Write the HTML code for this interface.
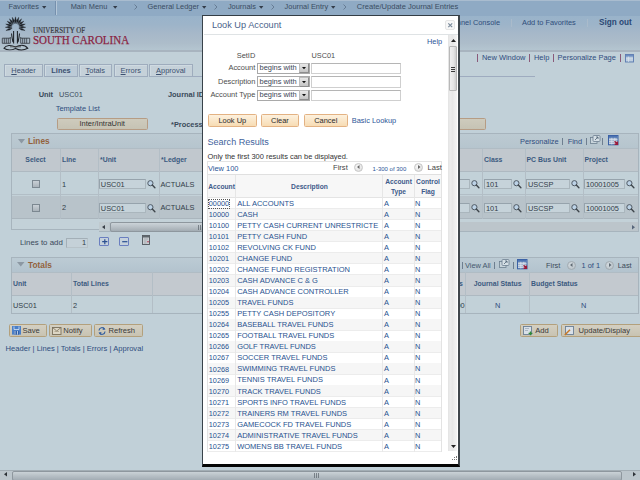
<!DOCTYPE html><html><head><meta charset="utf-8"><style>
html,body{margin:0;padding:0;width:640px;height:480px;overflow:hidden;background:#c1d0d8;}
body{position:relative;font-family:"Liberation Sans",sans-serif;}
.t{position:absolute;white-space:nowrap;line-height:1;}
.b{position:absolute;box-sizing:border-box;}
svg{position:absolute;overflow:visible;}
</style></head><body>
<div class="b" style="left:0.00px;top:0.00px;width:640.00px;height:16.00px;background:#8faac4;"></div>
<div class="b" style="left:0.00px;top:15.60px;width:640.00px;height:0.80px;background:#8aa3bd;"></div>
<div class="b" style="left:0.00px;top:0.00px;width:640.00px;height:1.20px;background:#a9bccf;"></div>
<div class="t" style="left:8.50px;top:2.87px;font-size:7.4px;color:#3a4c62;">Favorites</div>
<svg style="left:42px;top:5.8px" width="5" height="3"><path d="M0 0H4.4L2.2 2.7Z" fill="#333d4a"/></svg>
<div class="b" style="left:54.90px;top:1.20px;width:1.10px;height:14.30px;background:#7690ad;"></div>
<div class="b" style="left:56.00px;top:1.20px;width:0.80px;height:14.30px;background:#b5c7d8;"></div>
<div class="t" style="left:70.70px;top:2.87px;font-size:7.4px;color:#3a4c62;">Main Menu</div>
<svg style="left:112.6px;top:5.8px" width="5" height="3"><path d="M0 0H4.4L2.2 2.7Z" fill="#333d4a"/></svg>
<svg style="left:133.5px;top:4px" width="4" height="6"><path d="M0.5 0.5L3 3L0.5 5.5" stroke="#5c7088" stroke-width="0.8" fill="none"/></svg>
<div class="t" style="left:147.60px;top:2.87px;font-size:7.4px;color:#3a4c62;">General Ledger</div>
<svg style="left:202px;top:5.8px" width="5" height="3"><path d="M0 0H4.4L2.2 2.7Z" fill="#333d4a"/></svg>
<svg style="left:214px;top:4px" width="4" height="6"><path d="M0.5 0.5L3 3L0.5 5.5" stroke="#5c7088" stroke-width="0.8" fill="none"/></svg>
<div class="t" style="left:227.90px;top:2.87px;font-size:7.4px;color:#3a4c62;">Journals</div>
<svg style="left:258.8px;top:5.8px" width="5" height="3"><path d="M0 0H4.4L2.2 2.7Z" fill="#333d4a"/></svg>
<svg style="left:271px;top:4px" width="4" height="6"><path d="M0.5 0.5L3 3L0.5 5.5" stroke="#5c7088" stroke-width="0.8" fill="none"/></svg>
<div class="t" style="left:284.60px;top:2.87px;font-size:7.4px;color:#3a4c62;">Journal Entry</div>
<svg style="left:330.5px;top:5.8px" width="5" height="3"><path d="M0 0H4.4L2.2 2.7Z" fill="#333d4a"/></svg>
<svg style="left:342.5px;top:4px" width="4" height="6"><path d="M0.5 0.5L3 3L0.5 5.5" stroke="#5c7088" stroke-width="0.8" fill="none"/></svg>
<div class="t" style="left:356.80px;top:2.80px;font-size:7.55px;color:#3a4c62;">Create/Update Journal Entries</div>
<div class="b" style="left:0.00px;top:16.40px;width:640.00px;height:33.60px;background:linear-gradient(#99b3ca,#9db4c9 25%,#a6b8c9 50%,#adbdca 80%,#b4c5d0);"></div>
<div class="b" style="left:0.00px;top:50.00px;width:640.00px;height:1.50px;background:#a8b4bf;"></div>
<div class="t" style="right:140.00px;top:18.87px;font-size:7.4px;color:#2f4d7a;">Personnel Console</div>
<div class="b" style="left:510.80px;top:18.50px;width:0.70px;height:8.00px;background:#aabbcb;"></div>
<div class="t" style="left:522.00px;top:18.87px;font-size:7.4px;color:#2f4d7a;">Add to Favorites</div>
<div class="b" style="left:586.80px;top:18.50px;width:0.70px;height:8.00px;background:#aabbcb;"></div>
<div class="t" style="left:599.00px;top:19.18px;font-size:8.2px;color:#2b4874;font-weight:bold;">Sign out</div>
<svg style="left:0px;top:14px" width="34" height="38" viewBox="0 14 34 38"><path d="M12.21 28.20L9.08 28.38L5.92 30.49L9.70 30.07ZM12.00 27.10L8.98 26.29L5.30 27.30L9.03 28.09ZM12.15 26.00L9.53 24.27L5.73 24.07L9.01 26.00ZM12.63 24.99L10.69 22.53L7.14 21.15L9.66 24.01ZM13.41 24.19L12.34 21.25L9.41 18.82L10.90 22.32ZM14.40 23.68L14.31 20.55L12.29 17.32L12.60 21.11ZM15.50 23.50L16.40 20.50L15.50 16.80L14.60 20.50ZM16.60 23.68L18.40 21.11L18.71 17.32L16.69 20.55ZM17.59 24.19L20.10 22.32L21.59 18.82L18.66 21.25ZM18.37 24.99L21.34 24.01L23.86 21.15L20.31 22.53ZM18.85 26.00L21.99 26.00L25.27 24.07L21.47 24.27ZM19.00 27.10L21.97 28.09L25.70 27.30L22.02 26.29ZM18.79 28.20L21.30 30.07L25.08 30.49L21.92 28.38Z" fill="#1c2026" stroke="#1c2026" stroke-width="0.35"/><path d="M13.6 31V43.5M17.4 31V43.5M11.5 33.5Q12 38 13 42M19.5 33.5Q19 38 18 42" stroke="#1e2228" stroke-width="1.05" fill="none"/><path d="M2.3 38.2H10.3M20.7 38.2H29.7M2.3 38.2V43.3H10.3V37M20.7 37V43.3H29.7V38.2M4.3 38.2V43.3M6.3 38.2V43.3M8.3 38.2V43.3M22.7 38.2V43.3M24.7 38.2V43.3M26.7 38.2V43.3" stroke="#30353c" stroke-width="0.8" fill="none"/><path d="M4 48.3C6 44.8 11 44.8 15.5 47C20 44.8 25 44.8 27.8 48.3C24 50.3 19 50.3 15.5 48.5C12 50.3 7 50.3 4 48.3Z" stroke="#1e2228" stroke-width="1.05" fill="none"/><path d="M10 46.8H21" stroke="#444" stroke-width="0.8"/></svg>
<div class="t" style="left:33.00px;top:26.58px;font-size:7.6px;color:#35353a;font-family:&quot;Liberation Serif&quot;,serif;-webkit-text-stroke:0.15px #35353a;transform:scaleX(0.915);transform-origin:0 0;">UNIVERSITY OF</div>
<div class="t" style="left:32.60px;top:32.73px;font-size:13.4px;color:#8a1f42;font-family:&quot;Liberation Serif&quot;,serif;transform:scaleX(0.82);transform-origin:0 0;-webkit-text-stroke:0.25px #8a1f42;">SOUTH CAROLINA</div>
<div class="b" style="left:477.00px;top:54.00px;width:1.00px;height:8.00px;background:#8a5a7a;"></div>
<div class="t" style="left:482.00px;top:54.35px;font-size:7.45px;color:#2f4d7e;">New Window</div>
<div class="b" style="left:529.30px;top:54.00px;width:1.00px;height:8.00px;background:#8a5a7a;"></div>
<div class="t" style="left:534.00px;top:54.35px;font-size:7.45px;color:#2f4d7e;">Help</div>
<div class="b" style="left:552.80px;top:54.00px;width:1.00px;height:8.00px;background:#8a5a7a;"></div>
<div class="t" style="left:557.60px;top:54.35px;font-size:7.45px;color:#2f4d7e;">Personalize Page</div>
<div class="b" style="left:619.80px;top:54.00px;width:1.00px;height:8.00px;background:#8a5a7a;"></div>
<svg style="left:625px;top:54px" width="9" height="8.5"><rect x="0.5" y="0.5" width="8" height="7.5" fill="#b3c6da" stroke="#5a7ab0" stroke-width="0.9"/><rect x="1" y="1" width="7" height="1.6" fill="#6d8fc2"/><path d="M1 4.3H8M1 6H8M3.5 2.6V8" stroke="#e0e8f0" stroke-width="0.6"/></svg>
<div class="b" style="left:192.00px;top:76.10px;width:343.00px;height:1.00px;background:#9eabbf;"></div>
<div class="b" style="left:4.00px;top:63.80px;width:39.00px;height:13.20px;background:#c5d1d9;border:1px solid #9eacbd;box-shadow:inset 1px 1px 0 #cfdae1;"></div>
<div class="t" style="left:-176.50px;width:400px;text-align:center;top:66.65px;font-size:7.45px;color:#3b5070;"><u>H</u>eader</div>
<div class="b" style="left:44.00px;top:63.80px;width:34.00px;height:13.20px;background:#bccbd7;border:1px solid #9eacbd;box-shadow:inset 1px 1px 0 #cfdae1;"></div>
<div class="t" style="left:-139.00px;width:400px;text-align:center;top:66.65px;font-size:7.45px;color:#3b5070;font-weight:bold;">Lines</div>
<div class="b" style="left:79.00px;top:63.80px;width:32.50px;height:13.20px;background:#c5d1d9;border:1px solid #9eacbd;box-shadow:inset 1px 1px 0 #cfdae1;"></div>
<div class="t" style="left:-104.75px;width:400px;text-align:center;top:66.65px;font-size:7.45px;color:#3b5070;"><u>T</u>otals</div>
<div class="b" style="left:114.00px;top:63.80px;width:33.50px;height:13.20px;background:#c5d1d9;border:1px solid #9eacbd;box-shadow:inset 1px 1px 0 #cfdae1;"></div>
<div class="t" style="left:-69.25px;width:400px;text-align:center;top:66.65px;font-size:7.45px;color:#3b5070;"><u>E</u>rrors</div>
<div class="b" style="left:149.00px;top:63.80px;width:43.50px;height:13.20px;background:#c5d1d9;border:1px solid #9eacbd;box-shadow:inset 1px 1px 0 #cfdae1;"></div>
<div class="t" style="left:-29.25px;width:400px;text-align:center;top:66.65px;font-size:7.45px;color:#3b5070;"><u>A</u>pproval</div>
<div class="t" style="right:587.00px;top:90.97px;font-size:7.4px;color:#3a4a5a;font-weight:bold;">Unit</div>
<div class="t" style="left:59.00px;top:90.97px;font-size:7.4px;color:#3c4c5c;">USC01</div>
<div class="t" style="left:168.00px;top:90.97px;font-size:7.4px;color:#3a4a5a;font-weight:bold;">Journal ID</div>
<div class="t" style="left:55.70px;top:104.83px;font-size:7.5px;color:#2f4d7e;">Template List</div>
<div class="b" style="left:56.50px;top:118.40px;width:91.50px;height:12.00px;background:linear-gradient(#cecbbd,#c6c3b4);border:1px solid #b69c84;border-radius:1.5px;"></div>
<div class="t" style="left:-97.80px;width:400px;text-align:center;top:120.12px;font-size:7.5px;color:#333;">Inter/IntraUnit</div>
<div class="t" style="left:171.00px;top:120.87px;font-size:7.4px;color:#3a4a5a;font-weight:bold;">*Process</div>
<div class="b" style="left:380.00px;top:118.30px;width:105.50px;height:12.20px;background:linear-gradient(#cecbbd,#c6c3b4);border:1px solid #b69c84;border-radius:1.5px;"></div>
<div class="b" style="left:11.00px;top:133.20px;width:628.00px;height:98.80px;background:#c3d1d8;border:1px solid #a7b4bd;"></div>
<div class="b" style="left:12.00px;top:134.20px;width:626.00px;height:14.10px;background:linear-gradient(#bccad2,#b6c5ce);"></div>
<svg style="left:17.5px;top:138.5px" width="8" height="5"><path d="M0 0H7L3.5 4.5Z" fill="#8c98a3"/></svg>
<div class="t" style="left:28.00px;top:136.73px;font-size:8.3px;color:#93623c;font-weight:bold;">Lines</div>
<div class="t" style="left:520.00px;top:137.87px;font-size:7.4px;color:#2f4d7e;">Personalize</div>
<div class="b" style="left:585.50px;top:138.20px;width:0.80px;height:7.00px;background:#6e7f90;"></div>
<div class="t" style="left:567.70px;top:137.87px;font-size:7.4px;color:#2f4d7e;">Find</div>
<div class="b" style="left:602.00px;top:138.20px;width:0.80px;height:7.00px;background:#6e7f90;"></div>
<svg style="left:589.5px;top:135px" width="11" height="9"><rect x="0.5" y="2.5" width="6.5" height="6" fill="#c9d5dc" stroke="#6d7f90" stroke-width="0.8"/><rect x="3" y="0.5" width="7" height="6" rx="1" fill="#d6e0e6" stroke="#6d7f90" stroke-width="0.8"/><path d="M5 5L8 2M6 2H8V4" stroke="#4f6275" stroke-width="0.8" fill="none"/></svg>
<div class="b" style="left:561.50px;top:138.20px;width:0.80px;height:7.00px;background:#6e7f90;"></div>
<svg style="left:607.5px;top:134.8px" width="11" height="10.2"><rect x="0.5" y="0.5" width="9.5" height="9.3" fill="#9fb3cc" stroke="#3b62a6" stroke-width="1"/><rect x="1" y="1" width="8.5" height="1.8" fill="#4d74b3"/><path d="M1 4.6H9.5M1 6.6H9.5M1 8.4H9.5M3.8 2.8V9.5M6.8 2.8V9.5" stroke="#dfe7f0" stroke-width="0.7"/><path d="M6.6 6.3L9.2 8.9M9.4 6.4V9.3H6.5" stroke="#9a1b3a" stroke-width="1.4" fill="none"/></svg>
<div class="b" style="left:12.00px;top:148.30px;width:626.00px;height:23.30px;background:#c1c8ce;border-top:1px solid #b0bcc4;border-bottom:1px solid #aeb9c1;"></div>
<div class="b" style="left:12.00px;top:171.60px;width:626.00px;height:23.90px;background:#c2d1d8;border-bottom:1px solid #b2bec6;"></div>
<div class="b" style="left:12.00px;top:195.50px;width:626.00px;height:23.90px;background:#b8c3ca;border-bottom:1px solid #aab5bd;"></div>
<div class="b" style="left:60.20px;top:149.00px;width:0.90px;height:70.40px;background:#b3bec6;"></div>
<div class="b" style="left:97.90px;top:149.00px;width:0.90px;height:70.40px;background:#b3bec6;"></div>
<div class="b" style="left:158.70px;top:149.00px;width:0.90px;height:70.40px;background:#b3bec6;"></div>
<div class="b" style="left:482.20px;top:149.00px;width:0.90px;height:70.40px;background:#b3bec6;"></div>
<div class="b" style="left:524.60px;top:149.00px;width:0.90px;height:70.40px;background:#b3bec6;"></div>
<div class="b" style="left:582.60px;top:149.00px;width:0.90px;height:70.40px;background:#b3bec6;"></div>
<div class="t" style="left:-164.50px;width:400px;text-align:center;top:157.22px;font-size:6.9px;color:#3b5a80;font-weight:bold;">Select</div>
<div class="t" style="left:62.00px;top:157.22px;font-size:6.9px;color:#3b5a80;font-weight:bold;">Line</div>
<div class="t" style="left:100.00px;top:157.22px;font-size:6.9px;color:#3b5a80;font-weight:bold;">*Unit</div>
<div class="t" style="left:161.00px;top:157.22px;font-size:6.9px;color:#3b5a80;font-weight:bold;">*Ledger</div>
<div class="t" style="left:484.00px;top:157.22px;font-size:6.9px;color:#3b5a80;font-weight:bold;">Class</div>
<div class="t" style="left:526.50px;top:157.22px;font-size:6.9px;color:#3b5a80;font-weight:bold;">PC Bus Unit</div>
<div class="t" style="left:584.50px;top:157.22px;font-size:6.9px;color:#3b5a80;font-weight:bold;">Project</div>
<div class="b" style="left:31.90px;top:180.15px;width:8.10px;height:8.00px;background:linear-gradient(#c9d0d6,#aab3ba);border:1px solid #7c8891;"></div>
<div class="t" style="left:62.00px;top:180.52px;font-size:7.4px;color:#333d47;">1</div>
<div class="b" style="left:98.80px;top:179.05px;width:46.90px;height:10.40px;background:#c6d3da;border:1px solid #96a3ac;border-right-color:#aab6bd;border-bottom-color:#aab6bd;"></div>
<div class="t" style="left:100.80px;top:180.62px;font-size:7.4px;color:#333d47;">USC01</div>
<svg style="left:146.8px;top:180.15px" width="9" height="9"><circle cx="3.4" cy="3.2" r="2.6" stroke="#505a64" stroke-width="1" fill="#bcd2e6"/><path d="M5.3 5.1L7.9 7.8" stroke="#3f464c" stroke-width="1.4" stroke-linecap="round"/></svg>
<div class="t" style="left:160.40px;top:180.52px;font-size:7.4px;color:#333d47;">ACTUALS</div>
<div class="b" style="left:440.00px;top:179.05px;width:29.50px;height:10.40px;background:#c6d3da;border:1px solid #96a3ac;border-right-color:#aab6bd;border-bottom-color:#aab6bd;"></div>
<svg style="left:471px;top:180.15px" width="9" height="9"><circle cx="3.4" cy="3.2" r="2.6" stroke="#505a64" stroke-width="1" fill="#bcd2e6"/><path d="M5.3 5.1L7.9 7.8" stroke="#3f464c" stroke-width="1.4" stroke-linecap="round"/></svg>
<div class="b" style="left:484.00px;top:179.05px;width:27.60px;height:10.40px;background:#c6d3da;border:1px solid #96a3ac;border-right-color:#aab6bd;border-bottom-color:#aab6bd;"></div>
<div class="t" style="left:486.00px;top:180.62px;font-size:7.4px;color:#333d47;">101</div>
<svg style="left:513px;top:180.15px" width="9" height="9"><circle cx="3.4" cy="3.2" r="2.6" stroke="#505a64" stroke-width="1" fill="#bcd2e6"/><path d="M5.3 5.1L7.9 7.8" stroke="#3f464c" stroke-width="1.4" stroke-linecap="round"/></svg>
<div class="b" style="left:526.00px;top:179.05px;width:43.70px;height:10.40px;background:#c6d3da;border:1px solid #96a3ac;border-right-color:#aab6bd;border-bottom-color:#aab6bd;"></div>
<div class="t" style="left:528.00px;top:180.62px;font-size:7.4px;color:#333d47;">USCSP</div>
<svg style="left:571px;top:180.15px" width="9" height="9"><circle cx="3.4" cy="3.2" r="2.6" stroke="#505a64" stroke-width="1" fill="#bcd2e6"/><path d="M5.3 5.1L7.9 7.8" stroke="#3f464c" stroke-width="1.4" stroke-linecap="round"/></svg>
<div class="b" style="left:584.00px;top:179.05px;width:40.60px;height:10.40px;background:#c6d3da;border:1px solid #96a3ac;border-right-color:#aab6bd;border-bottom-color:#aab6bd;"></div>
<div class="t" style="left:586.00px;top:180.62px;font-size:7.4px;color:#333d47;">10001005</div>
<svg style="left:626px;top:180.15px" width="9" height="9"><circle cx="3.4" cy="3.2" r="2.6" stroke="#505a64" stroke-width="1" fill="#bcd2e6"/><path d="M5.3 5.1L7.9 7.8" stroke="#3f464c" stroke-width="1.4" stroke-linecap="round"/></svg>
<div class="b" style="left:31.90px;top:204.05px;width:8.10px;height:8.00px;background:linear-gradient(#c9d0d6,#aab3ba);border:1px solid #7c8891;"></div>
<div class="t" style="left:62.00px;top:204.42px;font-size:7.4px;color:#333d47;">2</div>
<div class="b" style="left:98.80px;top:202.95px;width:46.90px;height:10.40px;background:#c6d3da;border:1px solid #96a3ac;border-right-color:#aab6bd;border-bottom-color:#aab6bd;"></div>
<div class="t" style="left:100.80px;top:204.52px;font-size:7.4px;color:#333d47;">USC01</div>
<svg style="left:146.8px;top:204.04999999999998px" width="9" height="9"><circle cx="3.4" cy="3.2" r="2.6" stroke="#505a64" stroke-width="1" fill="#bcd2e6"/><path d="M5.3 5.1L7.9 7.8" stroke="#3f464c" stroke-width="1.4" stroke-linecap="round"/></svg>
<div class="t" style="left:160.40px;top:204.42px;font-size:7.4px;color:#333d47;">ACTUALS</div>
<div class="b" style="left:440.00px;top:202.95px;width:29.50px;height:10.40px;background:#c6d3da;border:1px solid #96a3ac;border-right-color:#aab6bd;border-bottom-color:#aab6bd;"></div>
<svg style="left:471px;top:204.04999999999998px" width="9" height="9"><circle cx="3.4" cy="3.2" r="2.6" stroke="#505a64" stroke-width="1" fill="#bcd2e6"/><path d="M5.3 5.1L7.9 7.8" stroke="#3f464c" stroke-width="1.4" stroke-linecap="round"/></svg>
<div class="b" style="left:484.00px;top:202.95px;width:27.60px;height:10.40px;background:#c6d3da;border:1px solid #96a3ac;border-right-color:#aab6bd;border-bottom-color:#aab6bd;"></div>
<div class="t" style="left:486.00px;top:204.52px;font-size:7.4px;color:#333d47;">101</div>
<svg style="left:513px;top:204.04999999999998px" width="9" height="9"><circle cx="3.4" cy="3.2" r="2.6" stroke="#505a64" stroke-width="1" fill="#bcd2e6"/><path d="M5.3 5.1L7.9 7.8" stroke="#3f464c" stroke-width="1.4" stroke-linecap="round"/></svg>
<div class="b" style="left:526.00px;top:202.95px;width:43.70px;height:10.40px;background:#c6d3da;border:1px solid #96a3ac;border-right-color:#aab6bd;border-bottom-color:#aab6bd;"></div>
<div class="t" style="left:528.00px;top:204.52px;font-size:7.4px;color:#333d47;">USCSP</div>
<svg style="left:571px;top:204.04999999999998px" width="9" height="9"><circle cx="3.4" cy="3.2" r="2.6" stroke="#505a64" stroke-width="1" fill="#bcd2e6"/><path d="M5.3 5.1L7.9 7.8" stroke="#3f464c" stroke-width="1.4" stroke-linecap="round"/></svg>
<div class="b" style="left:584.00px;top:202.95px;width:40.60px;height:10.40px;background:#c6d3da;border:1px solid #96a3ac;border-right-color:#aab6bd;border-bottom-color:#aab6bd;"></div>
<div class="t" style="left:586.00px;top:204.52px;font-size:7.4px;color:#333d47;">10001005</div>
<svg style="left:626px;top:204.04999999999998px" width="9" height="9"><circle cx="3.4" cy="3.2" r="2.6" stroke="#505a64" stroke-width="1" fill="#bcd2e6"/><path d="M5.3 5.1L7.9 7.8" stroke="#3f464c" stroke-width="1.4" stroke-linecap="round"/></svg>
<div class="b" style="left:11.00px;top:228.90px;width:88.00px;height:1.10px;background:#a7b4bd;"></div>
<div class="b" style="left:11.00px;top:230.00px;width:87.75px;height:3.00px;background:#c1d0d8;"></div>
<div class="b" style="left:98.75px;top:222.30px;width:539.25px;height:9.20px;background:#bcc5cb;"></div>
<div class="b" style="left:98.75px;top:222.30px;width:10.00px;height:9.20px;background:#c0cacf;"></div>
<svg style="left:102.2px;top:224.8px" width="4" height="5"><path d="M3 0V4.2L0 2.1Z" fill="#3a4048"/></svg>
<div class="b" style="left:110.00px;top:222.30px;width:182.00px;height:9.40px;background:linear-gradient(#cbd3d8,#b8c0c6 50%,#a3acb3);border:1px solid #8e979e;border-radius:2px;"></div>
<svg style="left:197.5px;top:224.5px" width="5" height="5"><path d="M0.5 0V5M2.5 0V5M4.5 0V5" stroke="#5a636a" stroke-width="0.7"/></svg>
<svg style="left:632px;top:224.8px" width="4" height="5"><path d="M0 0V4.6L3 2.3Z" fill="#56657a"/></svg>
<div class="t" style="left:20.00px;top:239.45px;font-size:7.85px;color:#3a4a5a;">Lines to add</div>
<div class="b" style="left:65.50px;top:238.00px;width:22.50px;height:10.30px;background:#c5d1d8;border:1px solid #a3afb7;border-right-color:#b8c3c9;border-bottom-color:#b8c3c9;"></div>
<div class="t" style="right:554.00px;top:239.37px;font-size:7.4px;color:#333d47;">1</div>
<div class="b" style="left:98.90px;top:237.20px;width:10.60px;height:8.40px;background:#c5d1dc;border:1px solid #6a7fc0;border-radius:1px;"></div>
<svg style="left:101.5px;top:238.8px" width="6" height="5.5"><path d="M2.8 0.2V5.2M0.2 2.7H5.4" stroke="#2a4f90" stroke-width="1.2"/></svg>
<div class="b" style="left:118.90px;top:237.20px;width:10.60px;height:8.40px;background:#c5d1dc;border:1px solid #6a7fc0;border-radius:1px;"></div>
<svg style="left:121.5px;top:238.8px" width="6" height="5.5"><path d="M0.2 2.7H5.4" stroke="#2a4f90" stroke-width="1.2"/></svg>
<svg style="left:141.9px;top:235.3px" width="8" height="10"><rect x="0.5" y="0.5" width="7" height="9" fill="#c9ced2" stroke="#4f565c" stroke-width="0.9"/><rect x="0.5" y="0.5" width="7" height="2" fill="#5f666c"/><path d="M2 4H6M2 6H4.5M2 8H4.5" stroke="#8f969b" stroke-width="0.6"/><circle cx="6" cy="6.8" r="0.8" fill="#b0304a"/></svg>
<div class="b" style="left:10.70px;top:257.00px;width:628.30px;height:56.50px;background:#c1d0d8;border:1px solid #a7b4bd;"></div>
<div class="b" style="left:12.00px;top:258.00px;width:626.00px;height:13.80px;background:linear-gradient(#bccbd4,#b3c3ce);"></div>
<svg style="left:17px;top:262px" width="8" height="5"><path d="M0 0H7.5L3.75 4.5Z" fill="#8c98a3"/></svg>
<div class="t" style="left:28.00px;top:260.83px;font-size:8.3px;color:#93623c;font-weight:bold;">Totals</div>
<div class="t" style="left:465.00px;top:261.97px;font-size:7.4px;color:#45586e;">View All</div>
<div class="b" style="left:461.50px;top:262.00px;width:0.80px;height:7.00px;background:#6e7f90;"></div>
<div class="b" style="left:494.00px;top:262.00px;width:0.80px;height:7.00px;background:#6e7f90;"></div>
<svg style="left:498.5px;top:258.8px" width="11" height="9"><rect x="0.5" y="2.5" width="6.5" height="6" fill="#c9d5dc" stroke="#6d7f90" stroke-width="0.8"/><rect x="3" y="0.5" width="7" height="6" rx="1" fill="#d6e0e6" stroke="#6d7f90" stroke-width="0.8"/><path d="M5 5L8 2M6 2H8V4" stroke="#4f6275" stroke-width="0.8" fill="none"/></svg>
<div class="b" style="left:512.50px;top:262.00px;width:0.80px;height:7.00px;background:#6e7f90;"></div>
<svg style="left:516.5px;top:258.5px" width="11" height="10.2"><rect x="0.5" y="0.5" width="9.5" height="9.3" fill="#9fb3cc" stroke="#3b62a6" stroke-width="1"/><rect x="1" y="1" width="8.5" height="1.8" fill="#4d74b3"/><path d="M1 4.6H9.5M1 6.6H9.5M1 8.4H9.5M3.8 2.8V9.5M6.8 2.8V9.5" stroke="#dfe7f0" stroke-width="0.7"/><path d="M6.6 6.3L9.2 8.9M9.4 6.4V9.3H6.5" stroke="#9a1b3a" stroke-width="1.4" fill="none"/></svg>
<div class="t" style="left:546.00px;top:261.97px;font-size:7.4px;color:#3c4a58;">First</div>
<div class="b" style="left:567.00px;top:260.50px;width:9.00px;height:9.00px;background:radial-gradient(circle at 40% 35%,#d3dbe0,#b5bec4);border:1px solid #a3acb2;border-radius:50%;"></div>
<svg style="left:570px;top:263px" width="3" height="4"><path d="M2.5 0V4L0 2Z" fill="#5f6a73"/></svg>
<div class="t" style="left:581.60px;top:261.97px;font-size:7.4px;color:#2f4d7e;">1 of 1</div>
<div class="b" style="left:605.00px;top:260.50px;width:9.00px;height:9.00px;background:radial-gradient(circle at 40% 35%,#d3dbe0,#b5bec4);border:1px solid #a3acb2;border-radius:50%;"></div>
<svg style="left:608.5px;top:263px" width="3" height="4"><path d="M0 0V4L2.5 2Z" fill="#5f6a73"/></svg>
<div class="t" style="left:617.70px;top:261.97px;font-size:7.4px;color:#3c4a58;">Last</div>
<div class="b" style="left:12.00px;top:271.80px;width:626.00px;height:24.30px;background:#c3c9cf;border-top:1px solid #b0bcc4;border-bottom:1px solid #aeb9c1;"></div>
<div class="b" style="left:12.00px;top:296.10px;width:626.00px;height:16.40px;background:#c2d1d8;"></div>
<div class="b" style="left:70.80px;top:272.00px;width:0.90px;height:40.50px;background:#b3bec6;"></div>
<div class="b" style="left:152.40px;top:272.00px;width:0.90px;height:40.50px;background:#b3bec6;"></div>
<div class="b" style="left:465.10px;top:272.00px;width:0.90px;height:40.50px;background:#b3bec6;"></div>
<div class="b" style="left:529.00px;top:272.00px;width:0.90px;height:40.50px;background:#b3bec6;"></div>
<div class="t" style="left:13.00px;top:281.22px;font-size:6.9px;color:#3b5a80;font-weight:bold;">Unit</div>
<div class="t" style="left:73.00px;top:281.22px;font-size:6.9px;color:#3b5a80;font-weight:bold;">Total Lines</div>
<div class="t" style="right:177.20px;top:281.22px;font-size:6.9px;color:#3b5a80;font-weight:bold;">Total Credits</div>
<div class="t" style="right:175.40px;top:301.57px;font-size:7.4px;color:#333d47;">0.00</div>
<div class="t" style="left:297.60px;width:400px;text-align:center;top:281.22px;font-size:6.9px;color:#3b5a80;font-weight:bold;">Journal Status</div>
<div class="t" style="left:531.00px;top:281.22px;font-size:6.9px;color:#3b5a80;font-weight:bold;">Budget Status</div>
<div class="t" style="left:13.00px;top:301.57px;font-size:7.4px;color:#333d47;">USC01</div>
<div class="t" style="left:73.00px;top:301.57px;font-size:7.4px;color:#333d47;">2</div>
<div class="t" style="left:297.60px;width:400px;text-align:center;top:301.57px;font-size:7.4px;color:#2f4d7e;">N</div>
<div class="t" style="left:383.60px;width:400px;text-align:center;top:301.57px;font-size:7.4px;color:#2f4d7e;">N</div>
<div class="b" style="left:9.30px;top:324.20px;width:37.50px;height:12.50px;background:linear-gradient(#d3cfc2,#c8c3b2);border:1px solid #b3a07c;border-radius:1.5px;"></div>
<div class="t" style="left:22.40px;top:326.88px;font-size:7.6px;color:#3a3a3a;">Save</div>
<svg style="left:12px;top:326px" width="9" height="8.6"><rect x="0" y="0" width="9" height="8.6" fill="#4a7fc8"/><path d="M2 0.5V3.5H7V0.5" stroke="#d8e4f4" stroke-width="0.8" fill="none"/><rect x="2" y="5" width="5" height="3.6" fill="#2f5fa8"/><path d="M3 5V8.6M5.5 5V8.6" stroke="#d8e4f4" stroke-width="0.8"/></svg>
<div class="b" style="left:49.00px;top:324.20px;width:42.80px;height:12.50px;background:linear-gradient(#d3cfc2,#c8c3b2);border:1px solid #b3a07c;border-radius:1.5px;"></div>
<div class="t" style="left:63.20px;top:326.88px;font-size:7.6px;color:#3a3a3a;">Notify</div>
<svg style="left:52px;top:326px" width="9.5" height="9"><rect x="0.5" y="1.5" width="8.5" height="7" fill="#ddd6c4" stroke="#7a705c" stroke-width="0.9"/><path d="M0.5 1.5L4.75 5L9 1.5" stroke="#7a705c" stroke-width="0.8" fill="none"/><path d="M2.5 5.5H7" stroke="#a09680" stroke-width="0.7"/></svg>
<div class="b" style="left:94.40px;top:324.20px;width:48.20px;height:12.50px;background:linear-gradient(#d3cfc2,#c8c3b2);border:1px solid #b3a07c;border-radius:1.5px;"></div>
<div class="t" style="left:108.50px;top:326.88px;font-size:7.6px;color:#3a3a3a;">Refresh</div>
<svg style="left:97px;top:325.5px" width="10" height="10"><path d="M2 4.5A3 3 0 0 1 7.5 3M8 5.5A3 3 0 0 1 2.5 7" stroke="#3561a0" stroke-width="1.2" fill="none"/><path d="M6.5 1L8.5 3.5L5.5 4Z M3.5 9L1.5 6.5L4.5 6Z" fill="#3561a0"/></svg>
<div class="b" style="left:520.00px;top:324.20px;width:37.60px;height:12.50px;background:linear-gradient(#d3cfc2,#c8c3b2);border:1px solid #b3a07c;border-radius:1.5px;"></div>
<div class="t" style="left:535.20px;top:326.88px;font-size:7.6px;color:#3a3a3a;">Add</div>
<svg style="left:523px;top:326px" width="10" height="9.5"><rect x="0.5" y="0.5" width="8" height="8" fill="#d9e0e8" stroke="#6a7f96" stroke-width="0.9"/><path d="M2 2.5H6M2 4.5H5" stroke="#8a9aab" stroke-width="0.6"/><path d="M7.5 5.5V9.3M5.6 7.4H9.4" stroke="#2f8a3a" stroke-width="1.3"/></svg>
<div class="b" style="left:560.50px;top:324.20px;width:84.50px;height:12.50px;background:linear-gradient(#d3cfc2,#c8c3b2);border:1px solid #b3a07c;border-radius:1.5px;"></div>
<div class="t" style="left:578.50px;top:326.88px;font-size:7.6px;color:#3a3a3a;">Update/Display</div>
<svg style="left:564px;top:326px" width="10" height="9.5"><rect x="1.5" y="0.5" width="8" height="8" fill="#d9e0e8" stroke="#6a7f96" stroke-width="0.9"/><path d="M0.8 9L6 3.8" stroke="#c87a2a" stroke-width="1.6"/></svg>
<div class="t" style="left:5.60px;top:345.19px;font-size:7.58px;color:#2f4d7e;">Header | Lines | Totals | Errors | Approval</div>
<div class="b" style="left:0.00px;top:469.50px;width:640.00px;height:10.50px;background:#bcc6cc;border-top:1px solid #a2adb4;"></div>
<svg style="left:3.8px;top:472.3px" width="4" height="5"><path d="M3 0V4.4L0 2.2Z" fill="#2e3338"/></svg>
<div class="b" style="left:11.50px;top:470.50px;width:610.00px;height:10.50px;background:linear-gradient(#cad2d7,#b6bfc5 50%,#a3adb4);border:1px solid #8e979e;border-radius:2px;"></div>
<svg style="left:314px;top:472.5px" width="5" height="5"><path d="M0.5 0V5M2.5 0V5M4.5 0V5" stroke="#5a636a" stroke-width="0.7"/></svg>
<svg style="left:633px;top:472.3px" width="4" height="5"><path d="M0 0V4.4L3 2.2Z" fill="#2e3338"/></svg>
<div class="b" style="left:202.40px;top:15.00px;width:257.60px;height:451.60px;background:#fff;border-style:solid;border-color:#333d45 #3f464b #050505 #39434b;border-width:1px 2px 3.7px 1.5px;"></div>
<div class="t" style="left:211.90px;top:20.99px;font-size:9.2px;color:#4a5f8a;">Look Up Account</div>
<div class="b" style="left:445.00px;top:20.20px;width:9.80px;height:9.40px;background:#f7f7f7;border:1px solid #e6e6e6;border-radius:2px;"></div>
<svg style="left:447.8px;top:22.8px" width="5" height="5"><path d="M0.3 0.3L4.2 4.2M4.2 0.3L0.3 4.2" stroke="#7a8a9b" stroke-width="1.15"/></svg>
<div class="b" style="left:204.00px;top:33.50px;width:254.00px;height:1.00px;background:#dfe3e5;"></div>
<div class="b" style="left:447.50px;top:34.50px;width:9.30px;height:416.80px;background:linear-gradient(90deg,#e3e3e3,#ececec 25%,#e7e7e7 50%,#eeeeee 75%,#f3f3f3);"></div>
<svg style="left:451px;top:38.5px" width="5" height="3"><path d="M0 3L2.5 0L5 3Z" fill="#222"/></svg>
<div class="b" style="left:448.80px;top:46.00px;width:8.20px;height:45.00px;background:linear-gradient(90deg,#f0f0f0,#e4e4e4 60%,#cfcfcf);border:1px solid #b8b8b8;border-radius:1px;"></div>
<svg style="left:450.6px;top:66px" width="4" height="7"><path d="M0 1.5H4M0 3.5H4M0 5.5H4" stroke="#3a3a3a" stroke-width="1"/></svg>
<svg style="left:451px;top:444.5px" width="5" height="3"><path d="M0 0L5 0L2.5 3Z" fill="#222"/></svg>
<div class="b" style="left:456.20px;top:455.50px;width:1.00px;height:1.00px;background:#777;"></div>
<div class="b" style="left:454.30px;top:457.40px;width:1.00px;height:1.00px;background:#777;"></div>
<div class="b" style="left:456.20px;top:457.40px;width:1.00px;height:1.00px;background:#777;"></div>
<div class="b" style="left:452.40px;top:459.30px;width:1.00px;height:1.00px;background:#777;"></div>
<div class="b" style="left:454.30px;top:459.30px;width:1.00px;height:1.00px;background:#777;"></div>
<div class="b" style="left:456.20px;top:459.30px;width:1.00px;height:1.00px;background:#777;"></div>
<div class="t" style="left:427.00px;top:37.67px;font-size:7.4px;color:#2b5597;">Help</div>
<div class="t" style="right:384.70px;top:51.55px;font-size:7.45px;color:#4d4d4d;">SetID</div>
<div class="t" style="left:311.60px;top:51.62px;font-size:7.3px;color:#4d4d4d;">USC01</div>
<div class="t" style="right:384.70px;top:64.35px;font-size:7.45px;color:#4d4d4d;">Account</div>
<div class="b" style="left:257.00px;top:62.50px;width:52.70px;height:11.00px;background:#fff;border:1px solid #a9a9a9;"></div>
<div class="t" style="left:259.50px;top:64.35px;font-size:7.45px;color:#3a4656;">begins with</div>
<div class="b" style="left:299.00px;top:63.10px;width:10.30px;height:9.80px;background:linear-gradient(#e8e8e8,#c4c4c4);border:1px solid #8d8d8d;border-top-color:#bdbdbd;border-left-color:#bdbdbd;"></div>
<svg style="left:302.2px;top:66.80px" width="4" height="3"><path d="M0 0H4L2 2.3Z" fill="#111"/></svg>
<div class="b" style="left:311.40px;top:62.50px;width:89.90px;height:11.30px;background:#fff;border:1px solid #cfcfcf;border-top-color:#b5b5b5;"></div>
<div class="t" style="right:384.70px;top:78.15px;font-size:7.45px;color:#4d4d4d;">Description</div>
<div class="b" style="left:257.00px;top:76.30px;width:52.70px;height:11.00px;background:#fff;border:1px solid #a9a9a9;"></div>
<div class="t" style="left:259.50px;top:78.15px;font-size:7.45px;color:#3a4656;">begins with</div>
<div class="b" style="left:299.00px;top:76.90px;width:10.30px;height:9.80px;background:linear-gradient(#e8e8e8,#c4c4c4);border:1px solid #8d8d8d;border-top-color:#bdbdbd;border-left-color:#bdbdbd;"></div>
<svg style="left:302.2px;top:80.60px" width="4" height="3"><path d="M0 0H4L2 2.3Z" fill="#111"/></svg>
<div class="b" style="left:311.40px;top:76.30px;width:89.90px;height:11.30px;background:#fff;border:1px solid #cfcfcf;border-top-color:#b5b5b5;"></div>
<div class="t" style="right:384.70px;top:91.35px;font-size:7.45px;color:#4d4d4d;">Account Type</div>
<div class="b" style="left:257.00px;top:89.50px;width:52.70px;height:11.00px;background:#fff;border:1px solid #a9a9a9;"></div>
<div class="t" style="left:259.50px;top:91.35px;font-size:7.45px;color:#3a4656;">begins with</div>
<div class="b" style="left:299.00px;top:90.10px;width:10.30px;height:9.80px;background:linear-gradient(#e8e8e8,#c4c4c4);border:1px solid #8d8d8d;border-top-color:#bdbdbd;border-left-color:#bdbdbd;"></div>
<svg style="left:302.2px;top:93.80px" width="4" height="3"><path d="M0 0H4L2 2.3Z" fill="#111"/></svg>
<div class="b" style="left:311.40px;top:89.50px;width:89.90px;height:11.30px;background:#fff;border:1px solid #cfcfcf;border-top-color:#b5b5b5;"></div>
<div class="b" style="left:208.00px;top:114.40px;width:48.60px;height:12.20px;background:linear-gradient(#fdf1de,#f7dcb4);border:1px solid #e3b283;border-radius:1.5px;"></div>
<div class="t" style="left:32.30px;width:400px;text-align:center;top:116.95px;font-size:7.45px;color:#2a2a2a;">Look Up</div>
<div class="b" style="left:260.60px;top:114.40px;width:38.70px;height:12.20px;background:linear-gradient(#fdf1de,#f7dcb4);border:1px solid #e3b283;border-radius:1.5px;"></div>
<div class="t" style="left:79.95px;width:400px;text-align:center;top:116.95px;font-size:7.45px;color:#2a2a2a;">Clear</div>
<div class="b" style="left:303.70px;top:114.40px;width:44.20px;height:12.20px;background:linear-gradient(#fdf1de,#f7dcb4);border:1px solid #e3b283;border-radius:1.5px;"></div>
<div class="t" style="left:125.80px;width:400px;text-align:center;top:116.95px;font-size:7.45px;color:#2a2a2a;">Cancel</div>
<div class="t" style="left:351.80px;top:117.27px;font-size:7.4px;color:#2b5597;">Basic Lookup</div>
<div class="t" style="left:207.50px;top:138.17px;font-size:9.05px;color:#3f639c;">Search Results</div>
<div class="t" style="left:207.50px;top:152.84px;font-size:7.46px;color:#333;">Only the first 300 results can be displayed.</div>
<div class="b" style="left:207.00px;top:161.00px;width:235.00px;height:291.30px;border:1px solid #e3e3e3;border-bottom:none;background:#fff;"></div>
<div class="t" style="left:208.00px;top:164.55px;font-size:7.45px;color:#2b5597;">View 100</div>
<div class="t" style="left:333.00px;top:164.48px;font-size:7.6px;color:#444;">First</div>
<div class="b" style="left:354.00px;top:162.50px;width:9.00px;height:9.00px;background:radial-gradient(circle at 40% 35%,#fbfbfb,#d9d9d9);border:1px solid #c7c7c7;border-radius:50%;"></div>
<svg style="left:357px;top:165.0px" width="3" height="4"><path d="M2.5 0V4L0 2Z" fill="#666"/></svg>
<div class="t" style="left:372.60px;top:166.26px;font-size:6.0px;color:#2b5597;">1-300 of 300</div>
<div class="b" style="left:414.40px;top:162.50px;width:9.00px;height:9.00px;background:radial-gradient(circle at 40% 35%,#fbfbfb,#d9d9d9);border:1px solid #c7c7c7;border-radius:50%;"></div>
<svg style="left:417.9px;top:165.0px" width="3" height="4"><path d="M0 0V4L2.5 2Z" fill="#666"/></svg>
<div class="t" style="left:427.60px;top:164.48px;font-size:7.6px;color:#444;">Last</div>
<div class="b" style="left:208.00px;top:174.00px;width:233.00px;height:24.20px;background:#f7f7f7;border-top:1px solid #e0e0e0;border-bottom:1.5px solid #e4e4e4;"></div>
<div class="b" style="left:235.30px;top:174.50px;width:1.00px;height:277.50px;background:#e6e6e6;"></div>
<div class="b" style="left:382.20px;top:174.50px;width:1.00px;height:277.50px;background:#e6e6e6;"></div>
<div class="b" style="left:413.60px;top:174.50px;width:1.00px;height:277.50px;background:#e6e6e6;"></div>
<div class="t" style="left:21.50px;width:400px;text-align:center;top:183.52px;font-size:6.7px;color:#3d5a8a;font-weight:bold;">Account</div>
<div class="t" style="left:109.50px;width:400px;text-align:center;top:183.52px;font-size:6.7px;color:#3d5a8a;font-weight:bold;">Description</div>
<div class="t" style="left:198.50px;width:400px;text-align:center;top:179.12px;font-size:6.7px;color:#3d5a8a;font-weight:bold;">Account</div>
<div class="t" style="left:198.50px;width:400px;text-align:center;top:188.52px;font-size:6.7px;color:#3d5a8a;font-weight:bold;">Type</div>
<div class="t" style="left:228.00px;width:400px;text-align:center;top:179.12px;font-size:6.7px;color:#3d5a8a;font-weight:bold;">Control</div>
<div class="t" style="left:228.00px;width:400px;text-align:center;top:188.52px;font-size:6.7px;color:#3d5a8a;font-weight:bold;">Flag</div>
<div class="b" style="left:208.00px;top:208.15px;width:233.00px;height:1.00px;background:#ececec;"></div>
<div class="b" style="left:235.30px;top:197.60px;width:1.00px;height:11.05px;background:#e8e8e8;"></div>
<div class="b" style="left:382.20px;top:197.60px;width:1.00px;height:11.05px;background:#e8e8e8;"></div>
<div class="b" style="left:413.60px;top:197.60px;width:1.00px;height:11.05px;background:#e8e8e8;"></div>
<div class="t" style="left:208.80px;top:199.75px;font-size:7.3px;color:#28528f;">00000</div>
<div class="t" style="left:237.20px;top:199.65px;font-size:7.5px;color:#28528f;">ALL ACCOUNTS</div>
<div class="t" style="left:383.90px;top:199.70px;font-size:7.4px;color:#28528f;">A</div>
<div class="t" style="left:415.00px;top:199.70px;font-size:7.4px;color:#28528f;">N</div>
<div class="b" style="left:208.00px;top:208.65px;width:233.00px;height:11.05px;background:#f6f6f6;"></div>
<div class="b" style="left:208.00px;top:219.20px;width:233.00px;height:1.00px;background:#ececec;"></div>
<div class="b" style="left:235.30px;top:208.65px;width:1.00px;height:11.05px;background:#e8e8e8;"></div>
<div class="b" style="left:382.20px;top:208.65px;width:1.00px;height:11.05px;background:#e8e8e8;"></div>
<div class="b" style="left:413.60px;top:208.65px;width:1.00px;height:11.05px;background:#e8e8e8;"></div>
<div class="t" style="left:208.80px;top:210.80px;font-size:7.3px;color:#28528f;">10000</div>
<div class="t" style="left:237.20px;top:210.70px;font-size:7.5px;color:#28528f;">CASH</div>
<div class="t" style="left:383.90px;top:210.75px;font-size:7.4px;color:#28528f;">A</div>
<div class="t" style="left:415.00px;top:210.75px;font-size:7.4px;color:#28528f;">N</div>
<div class="b" style="left:208.00px;top:230.25px;width:233.00px;height:1.00px;background:#ececec;"></div>
<div class="b" style="left:235.30px;top:219.70px;width:1.00px;height:11.05px;background:#e8e8e8;"></div>
<div class="b" style="left:382.20px;top:219.70px;width:1.00px;height:11.05px;background:#e8e8e8;"></div>
<div class="b" style="left:413.60px;top:219.70px;width:1.00px;height:11.05px;background:#e8e8e8;"></div>
<div class="t" style="left:208.80px;top:221.85px;font-size:7.3px;color:#28528f;">10100</div>
<div class="t" style="left:237.20px;top:221.75px;font-size:7.5px;color:#28528f;">PETTY CASH CURRENT UNRESTRICTE</div>
<div class="t" style="left:383.90px;top:221.80px;font-size:7.4px;color:#28528f;">A</div>
<div class="t" style="left:415.00px;top:221.80px;font-size:7.4px;color:#28528f;">N</div>
<div class="b" style="left:208.00px;top:230.75px;width:233.00px;height:11.05px;background:#f6f6f6;"></div>
<div class="b" style="left:208.00px;top:241.30px;width:233.00px;height:1.00px;background:#ececec;"></div>
<div class="b" style="left:235.30px;top:230.75px;width:1.00px;height:11.05px;background:#e8e8e8;"></div>
<div class="b" style="left:382.20px;top:230.75px;width:1.00px;height:11.05px;background:#e8e8e8;"></div>
<div class="b" style="left:413.60px;top:230.75px;width:1.00px;height:11.05px;background:#e8e8e8;"></div>
<div class="t" style="left:208.80px;top:232.90px;font-size:7.3px;color:#28528f;">10101</div>
<div class="t" style="left:237.20px;top:232.80px;font-size:7.5px;color:#28528f;">PETTY CASH FUND</div>
<div class="t" style="left:383.90px;top:232.85px;font-size:7.4px;color:#28528f;">A</div>
<div class="t" style="left:415.00px;top:232.85px;font-size:7.4px;color:#28528f;">N</div>
<div class="b" style="left:208.00px;top:252.35px;width:233.00px;height:1.00px;background:#ececec;"></div>
<div class="b" style="left:235.30px;top:241.80px;width:1.00px;height:11.05px;background:#e8e8e8;"></div>
<div class="b" style="left:382.20px;top:241.80px;width:1.00px;height:11.05px;background:#e8e8e8;"></div>
<div class="b" style="left:413.60px;top:241.80px;width:1.00px;height:11.05px;background:#e8e8e8;"></div>
<div class="t" style="left:208.80px;top:243.95px;font-size:7.3px;color:#28528f;">10102</div>
<div class="t" style="left:237.20px;top:243.85px;font-size:7.5px;color:#28528f;">REVOLVING CK FUND</div>
<div class="t" style="left:383.90px;top:243.90px;font-size:7.4px;color:#28528f;">A</div>
<div class="t" style="left:415.00px;top:243.90px;font-size:7.4px;color:#28528f;">N</div>
<div class="b" style="left:208.00px;top:252.85px;width:233.00px;height:11.05px;background:#f6f6f6;"></div>
<div class="b" style="left:208.00px;top:263.40px;width:233.00px;height:1.00px;background:#ececec;"></div>
<div class="b" style="left:235.30px;top:252.85px;width:1.00px;height:11.05px;background:#e8e8e8;"></div>
<div class="b" style="left:382.20px;top:252.85px;width:1.00px;height:11.05px;background:#e8e8e8;"></div>
<div class="b" style="left:413.60px;top:252.85px;width:1.00px;height:11.05px;background:#e8e8e8;"></div>
<div class="t" style="left:208.80px;top:255.00px;font-size:7.3px;color:#28528f;">10201</div>
<div class="t" style="left:237.20px;top:254.90px;font-size:7.5px;color:#28528f;">CHANGE FUND</div>
<div class="t" style="left:383.90px;top:254.95px;font-size:7.4px;color:#28528f;">A</div>
<div class="t" style="left:415.00px;top:254.95px;font-size:7.4px;color:#28528f;">N</div>
<div class="b" style="left:208.00px;top:274.45px;width:233.00px;height:1.00px;background:#ececec;"></div>
<div class="b" style="left:235.30px;top:263.90px;width:1.00px;height:11.05px;background:#e8e8e8;"></div>
<div class="b" style="left:382.20px;top:263.90px;width:1.00px;height:11.05px;background:#e8e8e8;"></div>
<div class="b" style="left:413.60px;top:263.90px;width:1.00px;height:11.05px;background:#e8e8e8;"></div>
<div class="t" style="left:208.80px;top:266.05px;font-size:7.3px;color:#28528f;">10202</div>
<div class="t" style="left:237.20px;top:265.95px;font-size:7.5px;color:#28528f;">CHANGE FUND REGISTRATION</div>
<div class="t" style="left:383.90px;top:266.00px;font-size:7.4px;color:#28528f;">A</div>
<div class="t" style="left:415.00px;top:266.00px;font-size:7.4px;color:#28528f;">N</div>
<div class="b" style="left:208.00px;top:274.95px;width:233.00px;height:11.05px;background:#f6f6f6;"></div>
<div class="b" style="left:208.00px;top:285.50px;width:233.00px;height:1.00px;background:#ececec;"></div>
<div class="b" style="left:235.30px;top:274.95px;width:1.00px;height:11.05px;background:#e8e8e8;"></div>
<div class="b" style="left:382.20px;top:274.95px;width:1.00px;height:11.05px;background:#e8e8e8;"></div>
<div class="b" style="left:413.60px;top:274.95px;width:1.00px;height:11.05px;background:#e8e8e8;"></div>
<div class="t" style="left:208.80px;top:277.10px;font-size:7.3px;color:#28528f;">10203</div>
<div class="t" style="left:237.20px;top:277.00px;font-size:7.5px;color:#28528f;">CASH ADVANCE C &amp; G</div>
<div class="t" style="left:383.90px;top:277.05px;font-size:7.4px;color:#28528f;">A</div>
<div class="t" style="left:415.00px;top:277.05px;font-size:7.4px;color:#28528f;">N</div>
<div class="b" style="left:208.00px;top:296.55px;width:233.00px;height:1.00px;background:#ececec;"></div>
<div class="b" style="left:235.30px;top:286.00px;width:1.00px;height:11.05px;background:#e8e8e8;"></div>
<div class="b" style="left:382.20px;top:286.00px;width:1.00px;height:11.05px;background:#e8e8e8;"></div>
<div class="b" style="left:413.60px;top:286.00px;width:1.00px;height:11.05px;background:#e8e8e8;"></div>
<div class="t" style="left:208.80px;top:288.15px;font-size:7.3px;color:#28528f;">10204</div>
<div class="t" style="left:237.20px;top:288.05px;font-size:7.5px;color:#28528f;">CASH ADVANCE CONTROLLER</div>
<div class="t" style="left:383.90px;top:288.10px;font-size:7.4px;color:#28528f;">A</div>
<div class="t" style="left:415.00px;top:288.10px;font-size:7.4px;color:#28528f;">N</div>
<div class="b" style="left:208.00px;top:297.05px;width:233.00px;height:11.05px;background:#f6f6f6;"></div>
<div class="b" style="left:208.00px;top:307.60px;width:233.00px;height:1.00px;background:#ececec;"></div>
<div class="b" style="left:235.30px;top:297.05px;width:1.00px;height:11.05px;background:#e8e8e8;"></div>
<div class="b" style="left:382.20px;top:297.05px;width:1.00px;height:11.05px;background:#e8e8e8;"></div>
<div class="b" style="left:413.60px;top:297.05px;width:1.00px;height:11.05px;background:#e8e8e8;"></div>
<div class="t" style="left:208.80px;top:299.20px;font-size:7.3px;color:#28528f;">10205</div>
<div class="t" style="left:237.20px;top:299.10px;font-size:7.5px;color:#28528f;">TRAVEL FUNDS</div>
<div class="t" style="left:383.90px;top:299.15px;font-size:7.4px;color:#28528f;">A</div>
<div class="t" style="left:415.00px;top:299.15px;font-size:7.4px;color:#28528f;">N</div>
<div class="b" style="left:208.00px;top:318.65px;width:233.00px;height:1.00px;background:#ececec;"></div>
<div class="b" style="left:235.30px;top:308.10px;width:1.00px;height:11.05px;background:#e8e8e8;"></div>
<div class="b" style="left:382.20px;top:308.10px;width:1.00px;height:11.05px;background:#e8e8e8;"></div>
<div class="b" style="left:413.60px;top:308.10px;width:1.00px;height:11.05px;background:#e8e8e8;"></div>
<div class="t" style="left:208.80px;top:310.25px;font-size:7.3px;color:#28528f;">10255</div>
<div class="t" style="left:237.20px;top:310.15px;font-size:7.5px;color:#28528f;">PETTY CASH DEPOSITORY</div>
<div class="t" style="left:383.90px;top:310.20px;font-size:7.4px;color:#28528f;">A</div>
<div class="t" style="left:415.00px;top:310.20px;font-size:7.4px;color:#28528f;">N</div>
<div class="b" style="left:208.00px;top:319.15px;width:233.00px;height:11.05px;background:#f6f6f6;"></div>
<div class="b" style="left:208.00px;top:329.70px;width:233.00px;height:1.00px;background:#ececec;"></div>
<div class="b" style="left:235.30px;top:319.15px;width:1.00px;height:11.05px;background:#e8e8e8;"></div>
<div class="b" style="left:382.20px;top:319.15px;width:1.00px;height:11.05px;background:#e8e8e8;"></div>
<div class="b" style="left:413.60px;top:319.15px;width:1.00px;height:11.05px;background:#e8e8e8;"></div>
<div class="t" style="left:208.80px;top:321.30px;font-size:7.3px;color:#28528f;">10264</div>
<div class="t" style="left:237.20px;top:321.20px;font-size:7.5px;color:#28528f;">BASEBALL TRAVEL FUNDS</div>
<div class="t" style="left:383.90px;top:321.25px;font-size:7.4px;color:#28528f;">A</div>
<div class="t" style="left:415.00px;top:321.25px;font-size:7.4px;color:#28528f;">N</div>
<div class="b" style="left:208.00px;top:340.75px;width:233.00px;height:1.00px;background:#ececec;"></div>
<div class="b" style="left:235.30px;top:330.20px;width:1.00px;height:11.05px;background:#e8e8e8;"></div>
<div class="b" style="left:382.20px;top:330.20px;width:1.00px;height:11.05px;background:#e8e8e8;"></div>
<div class="b" style="left:413.60px;top:330.20px;width:1.00px;height:11.05px;background:#e8e8e8;"></div>
<div class="t" style="left:208.80px;top:332.35px;font-size:7.3px;color:#28528f;">10265</div>
<div class="t" style="left:237.20px;top:332.25px;font-size:7.5px;color:#28528f;">FOOTBALL TRAVEL FUNDS</div>
<div class="t" style="left:383.90px;top:332.30px;font-size:7.4px;color:#28528f;">A</div>
<div class="t" style="left:415.00px;top:332.30px;font-size:7.4px;color:#28528f;">N</div>
<div class="b" style="left:208.00px;top:341.25px;width:233.00px;height:11.05px;background:#f6f6f6;"></div>
<div class="b" style="left:208.00px;top:351.80px;width:233.00px;height:1.00px;background:#ececec;"></div>
<div class="b" style="left:235.30px;top:341.25px;width:1.00px;height:11.05px;background:#e8e8e8;"></div>
<div class="b" style="left:382.20px;top:341.25px;width:1.00px;height:11.05px;background:#e8e8e8;"></div>
<div class="b" style="left:413.60px;top:341.25px;width:1.00px;height:11.05px;background:#e8e8e8;"></div>
<div class="t" style="left:208.80px;top:343.40px;font-size:7.3px;color:#28528f;">10266</div>
<div class="t" style="left:237.20px;top:343.30px;font-size:7.5px;color:#28528f;">GOLF TRAVEL FUNDS</div>
<div class="t" style="left:383.90px;top:343.35px;font-size:7.4px;color:#28528f;">A</div>
<div class="t" style="left:415.00px;top:343.35px;font-size:7.4px;color:#28528f;">N</div>
<div class="b" style="left:208.00px;top:362.85px;width:233.00px;height:1.00px;background:#ececec;"></div>
<div class="b" style="left:235.30px;top:352.30px;width:1.00px;height:11.05px;background:#e8e8e8;"></div>
<div class="b" style="left:382.20px;top:352.30px;width:1.00px;height:11.05px;background:#e8e8e8;"></div>
<div class="b" style="left:413.60px;top:352.30px;width:1.00px;height:11.05px;background:#e8e8e8;"></div>
<div class="t" style="left:208.80px;top:354.45px;font-size:7.3px;color:#28528f;">10267</div>
<div class="t" style="left:237.20px;top:354.35px;font-size:7.5px;color:#28528f;">SOCCER TRAVEL FUNDS</div>
<div class="t" style="left:383.90px;top:354.40px;font-size:7.4px;color:#28528f;">A</div>
<div class="t" style="left:415.00px;top:354.40px;font-size:7.4px;color:#28528f;">N</div>
<div class="b" style="left:208.00px;top:363.35px;width:233.00px;height:11.05px;background:#f6f6f6;"></div>
<div class="b" style="left:208.00px;top:373.90px;width:233.00px;height:1.00px;background:#ececec;"></div>
<div class="b" style="left:235.30px;top:363.35px;width:1.00px;height:11.05px;background:#e8e8e8;"></div>
<div class="b" style="left:382.20px;top:363.35px;width:1.00px;height:11.05px;background:#e8e8e8;"></div>
<div class="b" style="left:413.60px;top:363.35px;width:1.00px;height:11.05px;background:#e8e8e8;"></div>
<div class="t" style="left:208.80px;top:365.50px;font-size:7.3px;color:#28528f;">10268</div>
<div class="t" style="left:237.20px;top:365.40px;font-size:7.5px;color:#28528f;">SWIMMING TRAVEL FUNDS</div>
<div class="t" style="left:383.90px;top:365.45px;font-size:7.4px;color:#28528f;">A</div>
<div class="t" style="left:415.00px;top:365.45px;font-size:7.4px;color:#28528f;">N</div>
<div class="b" style="left:208.00px;top:384.95px;width:233.00px;height:1.00px;background:#ececec;"></div>
<div class="b" style="left:235.30px;top:374.40px;width:1.00px;height:11.05px;background:#e8e8e8;"></div>
<div class="b" style="left:382.20px;top:374.40px;width:1.00px;height:11.05px;background:#e8e8e8;"></div>
<div class="b" style="left:413.60px;top:374.40px;width:1.00px;height:11.05px;background:#e8e8e8;"></div>
<div class="t" style="left:208.80px;top:376.55px;font-size:7.3px;color:#28528f;">10269</div>
<div class="t" style="left:237.20px;top:376.45px;font-size:7.5px;color:#28528f;">TENNIS TRAVEL FUNDS</div>
<div class="t" style="left:383.90px;top:376.50px;font-size:7.4px;color:#28528f;">A</div>
<div class="t" style="left:415.00px;top:376.50px;font-size:7.4px;color:#28528f;">N</div>
<div class="b" style="left:208.00px;top:385.45px;width:233.00px;height:11.05px;background:#f6f6f6;"></div>
<div class="b" style="left:208.00px;top:396.00px;width:233.00px;height:1.00px;background:#ececec;"></div>
<div class="b" style="left:235.30px;top:385.45px;width:1.00px;height:11.05px;background:#e8e8e8;"></div>
<div class="b" style="left:382.20px;top:385.45px;width:1.00px;height:11.05px;background:#e8e8e8;"></div>
<div class="b" style="left:413.60px;top:385.45px;width:1.00px;height:11.05px;background:#e8e8e8;"></div>
<div class="t" style="left:208.80px;top:387.60px;font-size:7.3px;color:#28528f;">10270</div>
<div class="t" style="left:237.20px;top:387.50px;font-size:7.5px;color:#28528f;">TRACK TRAVEL FUNDS</div>
<div class="t" style="left:383.90px;top:387.55px;font-size:7.4px;color:#28528f;">A</div>
<div class="t" style="left:415.00px;top:387.55px;font-size:7.4px;color:#28528f;">N</div>
<div class="b" style="left:208.00px;top:407.05px;width:233.00px;height:1.00px;background:#ececec;"></div>
<div class="b" style="left:235.30px;top:396.50px;width:1.00px;height:11.05px;background:#e8e8e8;"></div>
<div class="b" style="left:382.20px;top:396.50px;width:1.00px;height:11.05px;background:#e8e8e8;"></div>
<div class="b" style="left:413.60px;top:396.50px;width:1.00px;height:11.05px;background:#e8e8e8;"></div>
<div class="t" style="left:208.80px;top:398.65px;font-size:7.3px;color:#28528f;">10271</div>
<div class="t" style="left:237.20px;top:398.55px;font-size:7.5px;color:#28528f;">SPORTS INFO TRAVEL FUNDS</div>
<div class="t" style="left:383.90px;top:398.60px;font-size:7.4px;color:#28528f;">A</div>
<div class="t" style="left:415.00px;top:398.60px;font-size:7.4px;color:#28528f;">N</div>
<div class="b" style="left:208.00px;top:407.55px;width:233.00px;height:11.05px;background:#f6f6f6;"></div>
<div class="b" style="left:208.00px;top:418.10px;width:233.00px;height:1.00px;background:#ececec;"></div>
<div class="b" style="left:235.30px;top:407.55px;width:1.00px;height:11.05px;background:#e8e8e8;"></div>
<div class="b" style="left:382.20px;top:407.55px;width:1.00px;height:11.05px;background:#e8e8e8;"></div>
<div class="b" style="left:413.60px;top:407.55px;width:1.00px;height:11.05px;background:#e8e8e8;"></div>
<div class="t" style="left:208.80px;top:409.70px;font-size:7.3px;color:#28528f;">10272</div>
<div class="t" style="left:237.20px;top:409.60px;font-size:7.5px;color:#28528f;">TRAINERS RM TRAVEL FUNDS</div>
<div class="t" style="left:383.90px;top:409.65px;font-size:7.4px;color:#28528f;">A</div>
<div class="t" style="left:415.00px;top:409.65px;font-size:7.4px;color:#28528f;">N</div>
<div class="b" style="left:208.00px;top:429.15px;width:233.00px;height:1.00px;background:#ececec;"></div>
<div class="b" style="left:235.30px;top:418.60px;width:1.00px;height:11.05px;background:#e8e8e8;"></div>
<div class="b" style="left:382.20px;top:418.60px;width:1.00px;height:11.05px;background:#e8e8e8;"></div>
<div class="b" style="left:413.60px;top:418.60px;width:1.00px;height:11.05px;background:#e8e8e8;"></div>
<div class="t" style="left:208.80px;top:420.75px;font-size:7.3px;color:#28528f;">10273</div>
<div class="t" style="left:237.20px;top:420.65px;font-size:7.5px;color:#28528f;">GAMECOCK FD TRAVEL FUNDS</div>
<div class="t" style="left:383.90px;top:420.70px;font-size:7.4px;color:#28528f;">A</div>
<div class="t" style="left:415.00px;top:420.70px;font-size:7.4px;color:#28528f;">N</div>
<div class="b" style="left:208.00px;top:429.65px;width:233.00px;height:11.05px;background:#f6f6f6;"></div>
<div class="b" style="left:208.00px;top:440.20px;width:233.00px;height:1.00px;background:#ececec;"></div>
<div class="b" style="left:235.30px;top:429.65px;width:1.00px;height:11.05px;background:#e8e8e8;"></div>
<div class="b" style="left:382.20px;top:429.65px;width:1.00px;height:11.05px;background:#e8e8e8;"></div>
<div class="b" style="left:413.60px;top:429.65px;width:1.00px;height:11.05px;background:#e8e8e8;"></div>
<div class="t" style="left:208.80px;top:431.80px;font-size:7.3px;color:#28528f;">10274</div>
<div class="t" style="left:237.20px;top:431.70px;font-size:7.5px;color:#28528f;">ADMINISTRATIVE TRAVEL FUNDS</div>
<div class="t" style="left:383.90px;top:431.75px;font-size:7.4px;color:#28528f;">A</div>
<div class="t" style="left:415.00px;top:431.75px;font-size:7.4px;color:#28528f;">N</div>
<div class="b" style="left:208.00px;top:451.25px;width:233.00px;height:1.00px;background:#ececec;"></div>
<div class="b" style="left:235.30px;top:440.70px;width:1.00px;height:11.05px;background:#e8e8e8;"></div>
<div class="b" style="left:382.20px;top:440.70px;width:1.00px;height:11.05px;background:#e8e8e8;"></div>
<div class="b" style="left:413.60px;top:440.70px;width:1.00px;height:11.05px;background:#e8e8e8;"></div>
<div class="t" style="left:208.80px;top:442.85px;font-size:7.3px;color:#28528f;">10275</div>
<div class="t" style="left:237.20px;top:442.75px;font-size:7.5px;color:#28528f;">WOMENS BB TRAVEL FUNDS</div>
<div class="t" style="left:383.90px;top:442.80px;font-size:7.4px;color:#28528f;">A</div>
<div class="t" style="left:415.00px;top:442.80px;font-size:7.4px;color:#28528f;">N</div>
<div class="b" style="left:207.80px;top:198.60px;width:22.40px;height:10.00px;border:1px dotted #555;"></div>
<div class="b" style="left:204.00px;top:451.80px;width:244.00px;height:11.10px;background:#fff;"></div>
<div class="b" style="left:448.00px;top:451.30px;width:10.20px;height:11.60px;background:#fff;"></div>
<div class="b" style="left:456.20px;top:455.50px;width:1.00px;height:1.00px;background:#777;"></div>
<div class="b" style="left:454.30px;top:457.40px;width:1.00px;height:1.00px;background:#777;"></div>
<div class="b" style="left:456.20px;top:457.40px;width:1.00px;height:1.00px;background:#777;"></div>
<div class="b" style="left:452.40px;top:459.30px;width:1.00px;height:1.00px;background:#777;"></div>
<div class="b" style="left:454.30px;top:459.30px;width:1.00px;height:1.00px;background:#777;"></div>
<div class="b" style="left:456.20px;top:459.30px;width:1.00px;height:1.00px;background:#777;"></div>
</body></html>
